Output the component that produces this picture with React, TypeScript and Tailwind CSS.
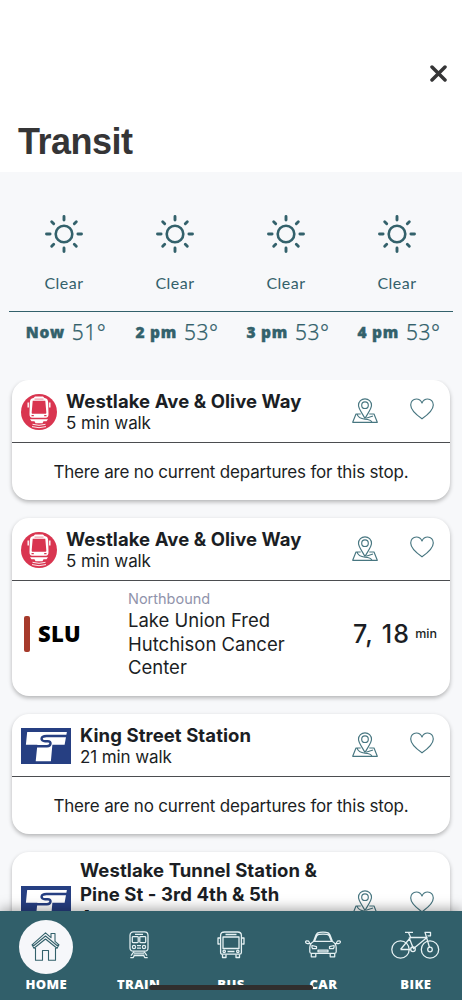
import type { ReactNode } from 'react';

const hours = [
  { label: 'Now', temp: '51°' },
  { label: '2 pm', temp: '53°' },
  { label: '3 pm', temp: '53°' },
  { label: '4 pm', temp: '53°' },
];

function SunIcon() {
  return (
    <svg width="38" height="38" viewBox="0 0 38 38" fill="none" stroke="#33616b" strokeWidth="2.900" strokeLinecap="round">
      <circle cx="19" cy="19" r="8.300" strokeWidth="2.600" />
      <path d="M19 1.500v3.600M19 32.900v3.600M1.500 19h3.600M32.900 19h3.600M6.700 6.700l2 2M29.300 29.300l2 2M6.700 31.300l2-2M29.300 8.700l2-2" />
    </svg>
  );
}

function StreetcarLogo() {
  return (
    <svg width="36" height="36" viewBox="0 0 36 36" className="mt-px shrink-0">
      <circle cx="18" cy="18" r="18" fill="#d93550" />
      <path d="M12.500 4 14 2.400h8L23.500 4c2.600.4 3.500 1.700 3.700 4.500L27.500 20c0 2.500-.8 3.700-2.700 3.700H11.200c-1.900 0-2.700-1.200-2.700-3.700L8.800 8.500C9 5.700 9.900 4.400 12.500 4z" fill="#fff" />
      <path d="M7.200 8.500v5M28.800 8.500v5" stroke="#fff" strokeWidth="1.400" />
      <path d="M11.700 6.800h12.600l1 11.500c.1 1-.3 1.500-1.200 1.500H11.900c-.9 0-1.300-.5-1.200-1.500z" fill="#d93550" />
      <path d="M10.500 21.700h2.300M23.200 21.700h2.300" stroke="#d93550" strokeWidth="1.200" />
      <path d="M13.500 5.100h9" stroke="#d93550" strokeWidth=".6" />
      <path d="M9 25.200h18l-1.500 2h-3l-1 2h-7l-1-2h-3z" fill="#fff" />
      <path d="M11.500 30.300q6.500 2 13 0M11 32.600q7 2.200 14 0" fill="none" stroke="#fff" strokeWidth=".9" />
    </svg>
  );
}

function SoundTransitLogo() {
  return (
    <svg width="50" height="36" viewBox="0 0 51 36" preserveAspectRatio="none" className="mt-px shrink-0">
      <path d="M0 0h51v36H0z" fill="#263f82" />
      <path d="M6.300 4h40.500L44.500 16.800H32L30.500 33.200H15l1.700-16.400H5z" fill="#fff" />
      <path d="M47 8H26c-6.500 0-6.300 5.200-1.500 5.200h2.800c4 0 3.700 5-.8 5H16" fill="none" stroke="#263f82" strokeWidth="2.500" />
    </svg>
  );
}

function MapPinIcon() {
  return (
    <svg width="26" height="26" viewBox="0 0 26 26" fill="none" stroke="#477680" strokeWidth="1.150" strokeLinejoin="round">
      <path d="M13 20.500C10.500 15.500 6.500 11 6.500 7.300a6.500 6.500 0 0 1 13 0c0 3.700-4 8.200-6.500 13.200z" />
      <circle cx="13" cy="7.200" r="3.300" />
      <path d="M8.700 16H4L.7 24.300h24.600L22 16h-4.700M5 16.200c1 3.300 4 4.600 8 5 3.500.2 6 .8 7 3M14 20.200l7-2.200" />
    </svg>
  );
}

function HeartIcon() {
  return (
    <svg width="24" height="22" viewBox="0 0 24 22" fill="none" stroke="#477680" strokeWidth="1.150" strokeLinejoin="round">
      <path d="M12 20.800C7 17.300.7 12.500.7 7 .7 3.500 3.200 1 6.300 1 9 1 11 2.500 12 5c1-2.500 3-4 5.700-4 3.100 0 5.600 2.500 5.600 6 0 5.500-6.300 10.300-11.300 13.800z" />
    </svg>
  );
}

function StopCard({ logo, name, walk, children }: { logo: ReactNode; name: string; walk: string; children?: ReactNode }) {
  return (
    <article className="shrink-0 rounded-[17px] bg-white shadow-[0_2px_4px_rgba(0,0,0,0.28)]">
      <header className="flex min-h-[63px] items-center border-b border-[#4b4d50] py-1.5 pr-[16px] pl-[9px]">
        {logo}
        <div className="ml-[9px] w-[250px] pt-px">
          <h2 className="text-[18.5px] leading-[23.5px] font-bold tracking-[0.08px] whitespace-pre-line">{name}</h2>
          <p className="text-[17px] leading-5 tracking-[-0.1px]">{walk}</p>
        </div>
        <div className="ml-auto flex items-center gap-[32px]">
          <div className="-mt-px"><MapPinIcon /></div>
          <div className="-mt-1"><HeartIcon /></div>
        </div>
      </header>
      {children}
    </article>
  );
}

function NoDepartures() {
  return <p className="flex h-[57px] items-center justify-center pt-[2px] text-[17px] tracking-[-0.17px] whitespace-nowrap">There are no current departures for this stop.</p>;
}

function HomeIcon() {
  return (
    <svg width="30" height="30" viewBox="0 0 30 30" fill="none" stroke="#33616b" strokeWidth="1.100" strokeLinejoin="round">
      <path d="M4.500 16v12.300h7V18.500h6v9.800h7V16M14.500.8 1 12.800l2 3.500L14.500 7l11.500 9.300 2-3.500-4-3.500V1.500h-4v4.200zM1 12.800l2 .7L14.500 4l11.500 9.500 2-.7" />
    </svg>
  );
}

function TrainIcon() {
  return (
    <svg width="20" height="28" viewBox="0 0 20 28" fill="none" stroke="#e6f1f3" strokeWidth="1.250" strokeLinejoin="round">
      <path d="M4.500.8h11c2.200 0 3.500 1.500 3.500 3.700V17c0 2-1.200 3.200-3.200 3.200H4.200C2.200 20.200 1 19 1 17V4.500C1 2.300 2.300.8 4.500.8zM6 3.300h8" />
      <rect x="3.300" y="5.500" width="5.900" height="6" rx=".8" /><rect x="10.800" y="5.500" width="5.900" height="6" rx=".8" />
      <circle cx="5" cy="16" r="1.600" /><circle cx="15" cy="16" r="1.600" />
      <path d="M8 14.500h4M8 17h4M5 20.500 2 24.500M15 20.500l3 4M5 22h10M4.500 24h11M1.300 26.500h3l1-2h9.400l1 2h3" />
    </svg>
  );
}

function BusIcon() {
  return (
    <svg width="28" height="28" viewBox="0 0 28 28" fill="none" stroke="#e6f1f3" strokeWidth="1.300" strokeLinejoin="round">
      <path d="M7.500 1h13c2.500 0 3.900 1 3.900 3.500v17c0 1-.5 1.700-1.700 1.700H5.300c-1.200 0-1.700-.7-1.700-1.700v-17C3.600 2 5 1 7.500 1zM8.500 3.500h11" />
      <path d="M6 6h16v11.500H6zM3.600 7H1v6h1.800M24.400 7H27v6h-1.800M5.500 23.500v3h3.500v-3M19 23.500v3h3.500v-3M10.500 20.500h7" />
      <circle cx="7.200" cy="20.300" r="1.200" /><circle cx="20.800" cy="20.300" r="1.200" />
    </svg>
  );
}

function CarIcon() {
  return (
    <svg width="36" height="28" viewBox="0 0 36 28" fill="none" stroke="#e6f1f3" strokeWidth="1.250" strokeLinejoin="round">
      <path d="M8.500 10.500 11 4c.8-2 1.700-2.600 3.500-2.700q3.500-.3 7 0c1.800.1 2.700.7 3.500 2.700l2.500 6.500q3.500 2 3.700 6v4.300c0 1-.5 1.500-1.500 1.500H6.300c-1 0-1.500-.5-1.500-1.500v-4.300q.2-4 3.700-6zM9.500 10.300h17L24.300 5c-.5-1.200-1-1.600-2.300-1.700q-4-.3-8 0c-1.300.1-1.800.5-2.300 1.700zM6.500 12.500H2.500C1.300 12.500.6 12 .6 10.900c0-1.200 1.500-1.200 3-.7l1.400 2.300M29.500 12.500h4c1.200 0 1.900-.5 1.900-1.600 0-1.200-1.500-1.200-3-.7L31 12.500" />
      <path d="M7 14.500l4.500 1.200v1.800H7.500q-1-1.200-.5-3zM29 14.500l-4.500 1.200v1.800h4q1-1.200.5-3zM13 19h10v1.800H13zM6.300 22.500v3.300h4.500v-3.300M25.200 22.500v3.300h4.500v-3.300" />
    </svg>
  );
}

function BikeIcon() {
  return (
    <svg width="49" height="28" viewBox="0 0 49 28" fill="none" stroke="#e6f1f3" strokeWidth="1.300" strokeLinejoin="round">
      <circle cx="9.500" cy="18.500" r="8.700" /><circle cx="39" cy="18.500" r="8.700" /><circle cx="39" cy="18.500" r="2.300" /><circle cx="22" cy="18.300" r="2.300" />
      <path d="M9.500 18.500h10M9.500 18.500l10-12M22 18 36 6.500H18.500M18 6.500l4 10M19.500 6l-2-4.500M14 1.300h8M38.500 16.500 34 1.300h5.500v3.500h-3" />
    </svg>
  );
}

const tabs = [
  { label: 'HOME', icon: <HomeIcon />, active: true },
  { label: 'TRAIN', icon: <TrainIcon /> },
  { label: 'BUS', icon: <BusIcon /> },
  { label: 'CAR', icon: <CarIcon /> },
  { label: 'BIKE', icon: <BikeIcon /> },
];

export default function App() {
  return (
    <div className="relative flex h-[1000px] w-full flex-col overflow-hidden bg-[#f7f8fa] font-['Inter',sans-serif] text-[#1b1e24]">
      <header className="flex h-[172px] shrink-0 flex-col bg-white pt-[65px] pr-[15px] pl-[18px]">
        <button aria-label="Close" className="self-end">
          <svg width="17" height="17" viewBox="0 0 17 17" stroke="#353536" strokeWidth="3.500" strokeLinecap="round">
            <path d="m2 2 13 13M15 2 2 15" />
          </svg>
        </button>
        <h1 className="mt-[38px] font-['Liberation_Sans',sans-serif] text-[36px] leading-[44px] font-bold tracking-[-0.5px] text-[#353536]">Transit</h1>
      </header>

      <section className="mx-[9px] h-[208px] shrink-0 text-[#33616b]">
        <div className="grid h-[140px] grid-cols-4 border-b border-[#33616b] pt-[43px]">
          {hours.map((h) => (
            <div key={h.label} className="flex flex-col items-center pr-px">
              <SunIcon />
              <span className="mt-[18px] font-['Lato',sans-serif] text-[16px] leading-6 tracking-[0.5px]">Clear</span>
            </div>
          ))}
        </div>
        <div className="grid grid-cols-4 pt-[6px]">
          {hours.map((h) => (
            <div key={h.label} className="flex items-center justify-center gap-[7px] pl-[3px] whitespace-nowrap">
              <span className="font-['Open_Sans',sans-serif] text-[15.5px] leading-6 font-extrabold tracking-[0.7px] [-webkit-text-stroke:0.4px]">{h.label}</span>
              <span className="font-['Noto_Sans',sans-serif] text-[21px] leading-7 font-light tracking-[0.5px] [-webkit-text-stroke:0.25px]">{h.temp}</span>
            </div>
          ))}
        </div>
      </section>

      <main className="flex min-h-0 flex-1 flex-col gap-[18px] overflow-hidden pr-[12px] pl-[12px]">
        <StopCard logo={<StreetcarLogo />} name="Westlake Ave & Olive Way" walk="5 min walk">
          <NoDepartures />
        </StopCard>
        <StopCard logo={<StreetcarLogo />} name="Westlake Ave & Olive Way" walk="5 min walk">
          <div className="flex h-[115px] pr-[13px] pl-[12px]">
            <div className="flex w-[104px] items-center gap-[8px] pb-[9px]">
              <span className="h-[36px] w-[6px] rounded-[2px] bg-[#a63a2b]" />
              <span className="-mt-[2px] font-['Open_Sans',sans-serif] text-[22px] font-extrabold tracking-[0.3px] text-black">SLU</span>
            </div>
            <div className="w-[185px] pt-[8px]">
              <p className="text-[14.5px] leading-5 text-[#9093ab]">Northbound</p>
              <p className="text-[18.5px] leading-[23.500px]">Lake Union Fred Hutchison Cancer Center</p>
            </div>
            <div className="ml-auto flex items-center gap-[5px] pb-[8px]">
              <span className="text-[25px] font-medium tracking-[1.2px]">7, 18</span>
              <span className="text-[12.5px] font-medium">min</span>
            </div>
          </div>
        </StopCard>
        <StopCard logo={<SoundTransitLogo />} name="King Street Station" walk="21 min walk">
          <NoDepartures />
        </StopCard>
        <StopCard logo={<SoundTransitLogo />} name={'Westlake Tunnel Station &\nPine St - 3rd 4th & 5th\nAve'} walk="3 min walk" />
      </main>

      <nav className="relative z-10 grid h-[89px] shrink-0 grid-cols-5 bg-[#315f6a] shadow-[0_-2px_12px_rgba(0,0,0,0.35)]">
        {tabs.map((t) => (
          <div key={t.label} className="flex flex-col items-center pt-[9px] text-white">
            <div className={t.active ? 'flex size-[54px] items-center justify-center rounded-full bg-[#f6f7fa]' : 'flex h-[54px] items-center justify-center pb-1'}>{t.icon}</div>
            <span className="font-['Open_Sans',sans-serif] text-[13px] leading-5 font-extrabold tracking-[0.4px]">{t.label}</span>
          </div>
        ))}
        <div className="absolute bottom-[10px] left-[149px] h-[5px] w-[164px] rounded-full bg-[#302e2d]" />
      </nav>
    </div>
  );
}
